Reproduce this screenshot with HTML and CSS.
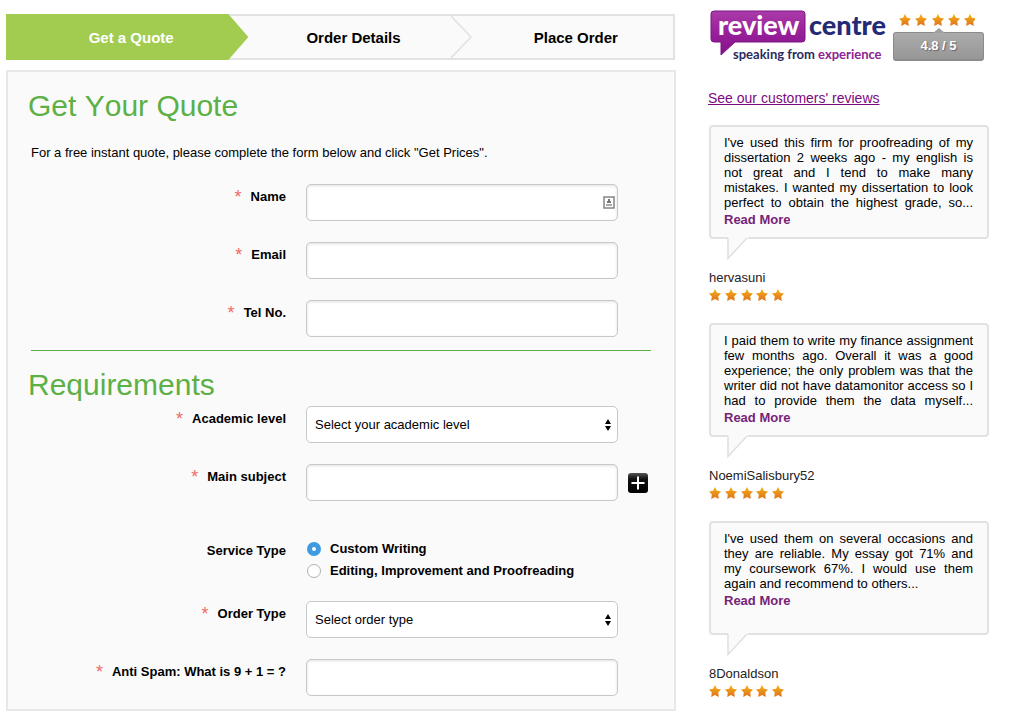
FILE: index.html
```
<!DOCTYPE html>
<html lang="en">
<head>
<meta charset="utf-8">
<title>Get Your Quote</title>
<link rel="stylesheet" href="styles.css">
</head>
<body>
<svg class="defs" width="0" height="0" aria-hidden="true">
  <defs>
    <linearGradient id="gold" x1="0" y1="0" x2="0" y2="1"><stop offset="0" stop-color="#f5b416"/><stop offset="1" stop-color="#df6f1c"/></linearGradient>
    <linearGradient id="violet" x1="0" y1="0" x2="0" y2="1"><stop offset="0" stop-color="#aa3ba9"/><stop offset="0.5" stop-color="#98209a"/><stop offset="1" stop-color="#84128a"/></linearGradient>
    <path id="star" d="M6 0 L7.9 3.7 L12 4.4 L9.200 7.4 L9.8 12 L6 10 L2.200 12 L2.800 7.4 L0 4.4 L4.100 3.7 Z"/>
    <g id="stars" fill="url(#gold)">
      <use href="#star"/><use href="#star" x="16"/><use href="#star" x="32"/><use href="#star" x="47"/><use href="#star" x="63"/>
    </g>
  </defs>
</svg>
<div class="page">
  <main>
    <ol class="steps">
      <li class="step step-active"><span>Get a Quote</span></li>
      <li class="step"><span>Order Details</span>
        <svg class="chevron" width="22" height="42" viewBox="0 0 22 42" aria-hidden="true"><path d="M0 0 L20 21 L0 42" fill="none" stroke="#e2e2e2" stroke-width="1.600"/></svg>
      </li>
      <li class="step"><span>Place Order</span></li>
    </ol>
    <form class="panel">
      <h1 class="title">Get Your Quote</h1>
      <p class="intro">For a free instant quote, please complete the form below and click "Get Prices".</p>
      <div class="fields">
        <div class="row">
          <label class="label" for="name"><span class="req">*</span>Name</label>
          <div class="control"><input class="box" id="name" type="text">
            <svg class="card-icon" width="12" height="13" viewBox="0 0 12 13" aria-hidden="true"><rect x="1" y="1" width="10" height="11" fill="#fff" stroke="#858585" stroke-width="1.5"/><path d="M5 3h2v2h1v2H4V5h1z" fill="#777"/><rect x="3" y="8" width="6" height="2" fill="#aaa"/></svg>
          </div>
        </div>
        <div class="row">
          <label class="label" for="email"><span class="req">*</span>Email</label>
          <div class="control"><input class="box" id="email" type="email"></div>
        </div>
        <div class="row">
          <label class="label" for="tel"><span class="req">*</span>Tel No.</label>
          <div class="control"><input class="box" id="tel" type="tel"></div>
        </div>
      </div>
      <hr class="rule">
      <h2 class="title title-second">Requirements</h2>
      <div class="fields">
        <div class="row">
          <label class="label" for="level"><span class="req">*</span>Academic level</label>
          <div class="control"><select class="box" id="level"><option>Select your academic level</option></select>
            <svg class="arrows" width="6" height="12" viewBox="0 0 6 12" aria-hidden="true"><path d="M3 0 L6 5 H0Z M0 7 H6 L3 12Z"/></svg>
          </div>
        </div>
        <div class="row">
          <label class="label" for="subject"><span class="req">*</span>Main subject</label>
          <div class="control"><input class="box" id="subject" type="text"></div>
          <button class="add" type="button" aria-label="Add subject">
            <svg width="20" height="20" viewBox="0 0 20 20" aria-hidden="true"><path d="M10 3.500V16.500M3.500 10H16.500" stroke="#fff" stroke-width="2"/></svg>
          </button>
        </div>
        <div class="row row-radio" role="radiogroup" aria-labelledby="service">
          <span class="label" id="service">Service Type</span>
          <div class="choices">
            <label class="choice"><input class="radio" type="radio" name="service" checked>Custom Writing</label>
            <label class="choice"><input class="radio" type="radio" name="service">Editing, Improvement and Proofreading</label>
          </div>
        </div>
        <div class="row">
          <label class="label" for="order"><span class="req">*</span>Order Type</label>
          <div class="control"><select class="box" id="order"><option>Select order type</option></select>
            <svg class="arrows" width="6" height="12" viewBox="0 0 6 12" aria-hidden="true"><path d="M3 0 L6 5 H0Z M0 7 H6 L3 12Z"/></svg>
          </div>
        </div>
        <div class="row">
          <label class="label" for="spam"><span class="req">*</span>Anti Spam: What is 9 + 1 = ?</label>
          <div class="control"><input class="box" id="spam" type="text"></div>
        </div>
      </div>
    </form>
  </main>
  <aside>
    <div class="brand">
      <svg class="logo" width="178" height="64" viewBox="0 -10 178 64" role="img" aria-label="review centre, speaking from experience">
        <path d="M5 1 H93 Q96 1 96 4 V29 Q96 32 93 32 H26 L12 45 V32 H5 Q2 32 2 29 V4 Q2 1 5 1Z" fill="url(#violet)" stroke="#7c1583"/>
        <text class="logo-big" x="9" y="25" fill="#fff">review</text>
        <text class="logo-big" x="100" y="25" fill="#252a75">centre</text>
        <text class="logo-small" x="24" y="49" fill="#2b2b5e">speaking from <tspan fill="#8d2290">experience</tspan></text>
      </svg>
      <div class="rating">
        <svg width="78" height="12" viewBox="0 0 78 12" aria-hidden="true">
          <g fill="url(#gold)"><use href="#star"/><use href="#star" x="16"/><use href="#star" x="33"/><use href="#star" x="49"/><path d="M71 0 L72.900 3.700 L76 4.200 V6 L74.200 7.400 L74.800 12 L71 10 L67.200 12 L67.800 7.400 L65 4.400 L69.100 3.700Z"/></g>
        </svg>
        <div class="score">4.8 / 5</div>
      </div>
    </div>
    <a class="all" href="#reviews">See our customers' reviews</a>
    <div class="reviews" id="reviews">
      <article class="review">
        <div class="bubble"><p class="quote quote-full">I've used this firm for proofreading of my dissertation 2 weeks ago - my english is not great and I tend to make many mistakes. I wanted my dissertation to look perfect to obtain the highest grade, so...</p><a class="more" href="#r1">Read More</a></div>
        <svg class="tail" width="22" height="23" viewBox="0 0 22 23" aria-hidden="true"><path d="M1 0 H21 V1 L1 21.500Z" fill="#fafafa"/><path d="M1 1 V21.500 L20 1" fill="none" stroke="#e0e0e0" stroke-width="1.500"/></svg>
        <div class="author">hervasuni</div>
        <svg class="stars" width="76" height="12" viewBox="0 0 76 12" role="img" aria-label="5 stars"><use href="#stars"/></svg>
      </article>
      <article class="review">
        <div class="bubble"><p class="quote quote-full">I paid them to write my finance assignment few months ago. Overall it was a good experience; the only problem was that the writer did not have datamonitor access so I had to provide them the data myself...</p><a class="more" href="#r2">Read More</a></div>
        <svg class="tail" width="22" height="23" viewBox="0 0 22 23" aria-hidden="true"><path d="M1 0 H21 V1 L1 21.500Z" fill="#fafafa"/><path d="M1 1 V21.500 L20 1" fill="none" stroke="#e0e0e0" stroke-width="1.500"/></svg>
        <div class="author">NoemiSalisbury52</div>
        <svg class="stars" width="76" height="12" viewBox="0 0 76 12" role="img" aria-label="5 stars"><use href="#stars"/></svg>
      </article>
      <article class="review">
        <div class="bubble"><p class="quote">I've used them on several occasions and they are reliable. My essay got 71% and my coursework 67%. I would use them again and recommend to others...</p><a class="more" href="#r3">Read More</a></div>
        <svg class="tail" width="22" height="23" viewBox="0 0 22 23" aria-hidden="true"><path d="M1 0 H21 V1 L1 21.500Z" fill="#fafafa"/><path d="M1 1 V21.500 L20 1" fill="none" stroke="#e0e0e0" stroke-width="1.500"/></svg>
        <div class="author">8Donaldson</div>
        <svg class="stars" width="76" height="12" viewBox="0 0 76 12" role="img" aria-label="5 stars"><use href="#stars"/></svg>
      </article>
    </div>
  </aside>
</div>
</body>
</html>
```
FILE: styles.css
```
* { box-sizing: border-box; }
body {
  margin: 0;
  background: #fff;
  color: #000;
  font: 13px/20px "Liberation Sans", Arial, sans-serif;
}
svg { display: block; }
.defs { position: absolute; }
.page {
  display: grid;
  grid-template-columns: minmax(0, 1fr) 280px;
  gap: 33px;
  padding: 0 20px 0 6px;
}

/* Progress steps */
.steps {
  display: flex;
  height: 46px;
  margin: 14px 1px 10px 0;
  padding: 0;
  list-style: none;
  background: #fafafa;
}
.step {
  position: relative;
  flex: 1;
  display: flex;
  align-items: center;
  justify-content: center;
  padding-left: 28px;
  padding-top: 1px;
  font-size: 15px;
  font-weight: bold;
  border: solid #e2e2e2;
  border-width: 2px 0;
}
.step:last-child { border-right-width: 2px; }
.step-active {
  z-index: 1;
  border: 0;
  color: #fff;
}
.step-active::before {
  content: "";
  position: absolute;
  z-index: -1;
  inset: 0 -20px 0 0;
  background: #a1cc50;
  clip-path: polygon(0 0, calc(100% - 20px) 0, 100% 50%, calc(100% - 20px) 100%, 0 100%);
}
.chevron { position: absolute; left: 100%; top: 0; z-index: 1; }

/* Form panel */
.panel {
  padding: 16px 23px 13px;
  border: 2px solid #e8e8e8;
  background: #fafafa;
}
.title {
  margin: 0 0 0 -3px;
  color: #5cb046;
  font-size: 30px;
  line-height: 36px;
  font-weight: normal;
  font-kerning: none;
}
.title-second { margin-bottom: 3px; }
.intro { margin: 19px 0 21px; }
.rule {
  height: 1px;
  margin: 13px 0 16px;
  border: 0;
  background: #5cb046;
}
.fields { display: grid; gap: 21px; }
.row {
  display: grid;
  grid-template-columns: minmax(0, 275px) minmax(0, 312px) auto;
  justify-content: start;
}
.label {
  display: flex;
  justify-content: flex-end;
  align-items: center;
  height: 20px;
  margin: 3px 20px 0 0;
  font-weight: bold;
}
.req {
  height: 20px;
  margin-right: 9px;
  color: #f06a68;
  font-size: 18px;
  font-weight: normal;
}
.control { position: relative; }
.box {
  display: block;
  width: 100%;
  height: 37px;
  padding: 0 8px;
  border: 1px solid #c8c8c8;
  border-radius: 5px;
  background: #fff;
  box-shadow: inset 0 1px 3px rgba(0, 0, 0, 0.12);
  color: #000;
  font: inherit;
  appearance: none;
}
select.box { box-shadow: none; }
.card-icon { position: absolute; right: 3px; top: 12px; }
.arrows { position: absolute; right: 7px; top: 13px; }
.add {
  align-self: center;
  width: 20px;
  height: 20px;
  margin-left: 10px;
  padding: 0;
  border: 0;
  border-radius: 3px;
  background: linear-gradient(#555, #111 30%, #000);
}
.row-radio {
  grid-template-columns: 275px minmax(0, 1fr);
  justify-content: stretch;
  margin: 16px 0 -2px;
}
.choices { display: grid; }
.choice {
  display: flex;
  align-items: center;
  height: 22px;
  font-weight: bold;
}
.radio {
  width: 14px;
  height: 14px;
  margin: 0 9px 0 1px;
  border: 1px solid #b0b0b0;
  border-radius: 50%;
  background: #fff;
  appearance: none;
}
.radio:checked { border: 5px solid #3f9ae0; }

/* Reviews */
.brand { display: flex; gap: 6px; }
.logo-big { font: 900 27px Lato, sans-serif; }
.logo-small { font: bold 13px Lato, sans-serif; }
.rating { padding-top: 14px; }
.rating svg { margin-left: 6px; }
.score {
  position: relative;
  width: 91px;
  height: 29px;
  margin-top: 6px;
  border: 1px solid #8b8b8b;
  border-bottom-width: 2px;
  border-radius: 3px;
  background: linear-gradient(#ababab, #979797);
  color: #fff;
  font-weight: bold;
  line-height: 25px;
  text-align: center;
  text-shadow: 1px 1px 1px #666;
}
.score::before {
  content: "";
  position: absolute;
  left: 39px;
  top: -5px;
  width: 12px;
  height: 5px;
  background: #a0a0a0;
  clip-path: polygon(50% 0, 100% 100%, 0 100%);
}
.all {
  display: block;
  margin: 24px 0 17px -1px;
  color: #7d0a80;
  font-size: 14px;
}
.reviews { display: grid; gap: 22px; }
.bubble {
  min-height: 114px;
  padding: 8px 14px 7px 13px;
  border: 2px solid #e2e2e2;
  border-radius: 4px;
  background: #fafafa;
}
.quote {
  margin: 0;
  line-height: 15px;
  text-align: justify;
}
.quote-full { text-align-last: justify; }
.more {
  display: block;
  line-height: 19px;
  color: #762378;
  font-weight: bold;
  text-decoration: none;
}
.tail { position: relative; margin: -2px 0 0 18px; }
.author {
  margin-top: 9px;
  color: #222;
  line-height: 18px;
}
.stars { margin-top: 2px; }
```
